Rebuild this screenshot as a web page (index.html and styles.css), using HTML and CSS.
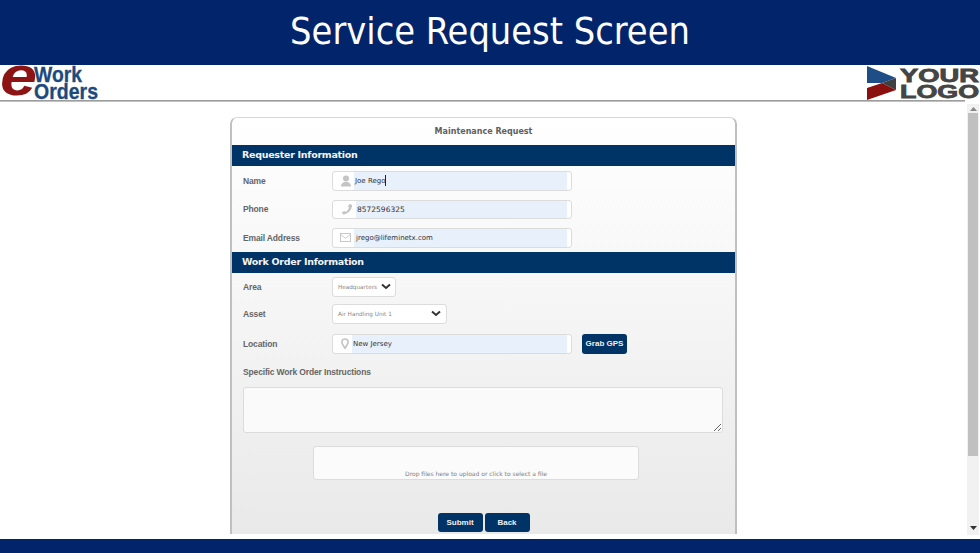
FILE: index.html
```html
<!DOCTYPE html>
<html lang="en">
<head>
<meta charset="utf-8">
<title>Service Request Screen</title>
<link rel="stylesheet" href="styles.css">
</head>
<body>
<header class="slide-title">Service Request Screen</header>
<div class="brand">
  <svg class="logo-left" width="100" height="35" viewBox="0 0 100 35">
    <text class="logo-e" x="0" y="30" textLength="37" lengthAdjust="spacingAndGlyphs">e</text>
    <text class="logo-word" x="34" y="17" textLength="48" lengthAdjust="spacingAndGlyphs">Work</text>
    <text class="logo-word" x="34" y="34" textLength="64" lengthAdjust="spacingAndGlyphs">Orders</text>
  </svg>
  <svg class="logo-right" width="113" height="35" viewBox="0 0 113 35">
    <polygon fill="#1f4e86" points="0,1 29,13 15,18 0,18"/>
    <polygon fill="#404040" points="15,18 29,13 29,25"/>
    <polygon fill="#8a1010" points="0,23 15,18 29,25 0,35"/>
    <text class="logo-your" x="33" y="17" textLength="79" lengthAdjust="spacingAndGlyphs">YOUR</text>
    <text class="logo-your" x="33" y="33" textLength="79" lengthAdjust="spacingAndGlyphs">LOGO</text>
  </svg>
</div>
<div class="brand-rule"></div>
<div class="workspace">
  <main class="viewport">
    <form class="card">
      <h1 class="card-title">Maintenance Request</h1>
      <h2 class="section">Requester Information</h2>
      <div class="group group-requester">
        <div class="row">
          <label class="label">Name</label>
          <div class="input">
            <span class="icon"><svg width="12" height="12" viewBox="0 0 12 12"><circle cx="6" cy="3.6" r="3" fill="#c4c4c4"/><path d="M1 11.5c0-3 2-4 3.5-4.4h3C9 7.500 11 8.500 11 11.500z" fill="#c4c4c4"/></svg></span>
            <span class="value value-name">Joe Rego<i class="caret"></i></span>
          </div>
        </div>
        <div class="row">
          <label class="label">Phone</label>
          <div class="input">
            <span class="icon icon-phone"><svg width="12" height="12" viewBox="0 0 12 12"><path d="M9 .8l2 1.200c.3 4.500-4 9.500-9 9.400L.8 9.300l2.800-1.400 1 1.200C6.500 8 7.800 6 8 4.300L6.800 3.500z" fill="#c4c4c4"/></svg></span>
            <span class="value value-phone">8572596325</span>
          </div>
        </div>
        <div class="row">
          <label class="label">Email Address</label>
          <div class="input">
            <span class="icon"><svg width="11" height="9" viewBox="0 0 12 10"><rect x=".5" y=".5" width="11" height="9" fill="none" stroke="#c4c4c4"/><path d="M.5 1.500L6 6l5.500-4.500" fill="none" stroke="#c4c4c4"/></svg></span>
            <span class="value value-email">jrego@lifeminetx.com</span>
          </div>
        </div>
      </div>
      <h2 class="section">Work Order Information</h2>
      <div class="group group-order">
        <div class="row">
          <label class="label">Area</label>
          <div class="select select-area"><span>Headquarters</span><svg width="10" height="7" viewBox="0 0 10 7"><path d="M1 1.500l4 3.500 4-3.500" fill="none" stroke="#333" stroke-width="2"/></svg></div>
        </div>
        <div class="row row-asset">
          <label class="label">Asset</label>
          <div class="select select-asset"><span>Air Handling Unit 1</span><svg width="10" height="7" viewBox="0 0 10 7"><path d="M1 1.500l4 3.500 4-3.500" fill="none" stroke="#333" stroke-width="2"/></svg></div>
        </div>
        <div class="row row-location">
          <label class="label">Location</label>
          <div class="input">
            <span class="icon icon-pin"><svg width="8" height="11" viewBox="0 0 9 12"><path d="M4.500 11.500C3 8.500 1 6.500 1 4.500a3.500 3.500 0 0 1 7 0c0 2-2 4-3.500 7z" fill="none" stroke="#c4c4c4" stroke-width="1.800"/></svg></span>
            <span class="value value-location">New Jersey</span>
          </div>
          <button type="button" class="btn btn-gps">Grab GPS</button>
        </div>
        <label class="label label-wide">Specific Work Order Instructions</label>
        <textarea class="notes"></textarea>
        <div class="dropzone">Drop files here to upload or click to select a file</div>
        <div class="actions">
          <button type="button" class="btn">Submit</button>
          <button type="button" class="btn">Back</button>
        </div>
      </div>
    </form>
  </main>
  <div class="scrollbar">
    <svg width="7" height="4" viewBox="0 0 7 4"><polygon points="3.500,0 7,4 0,4" fill="#888"/></svg>
    <div class="thumb"></div>
    <svg class="arrow-down" width="7" height="4" viewBox="0 0 7 4"><polygon points="0,0 7,0 3.500,4" fill="#333"/></svg>
  </div>
</div>
<footer class="slide-footer"></footer>
</body>
</html>
```
FILE: styles.css
```css
* { box-sizing: border-box; }
html, body { height: 100%; }
body {
  margin: 0;
  width: 980px;
  height: 553px;
  overflow: hidden;
  display: flex;
  flex-direction: column;
  background: #fff;
  font-family: "Liberation Sans", Arial, sans-serif;
}
.slide-title {
  flex: 0 0 65px;
  background: #02246b;
  color: #fff;
  font-family: "DejaVu Sans Condensed", "DejaVu Sans", sans-serif;
  font-stretch: condensed;
  font-size: 37.600px;
  line-height: 62px;
  text-align: center;
}
.brand {
  flex: 0 0 35px;
  display: flex;
  justify-content: space-between;
  background: #fff;
}
.logo-left, .logo-right { display: block; overflow: visible; }
.logo-e {
  font: italic bold 56px "Liberation Sans", sans-serif;
  fill: #8c1414;
}
.logo-word {
  font: bold 22px "Liberation Sans", sans-serif;
  fill: #1d4a7c;
  stroke: #1d4a7c;
  stroke-width: .3px;
}
.logo-your {
  font: bold 18px "Liberation Sans", sans-serif;
  fill: #454545;
  stroke: #454545;
  stroke-width: .8px;
}
.brand-rule {
  flex: 0 0 2px;
  margin-right: 15px;
  background: linear-gradient(#8c8c8c, #d0d0d0);
}
.workspace {
  flex: 1;
  min-height: 0;
  display: flex;
  margin-bottom: 5px;
}
.viewport {
  flex: 1;
  min-width: 0;
  overflow: hidden;
  padding: 15px 0 0 230px;
}
.card {
  width: 507px;
  height: 440px;
  border-style: solid;
  border-width: 1px 2px 0;
  border-color: #d8d8d8 #c0c0c0;
  border-radius: 7px 7px 0 0;
  background: linear-gradient(#fff, #f6f6f6 40%, #e8e8e8);
  margin: 0;
}
.card-title {
  margin: 0;
  height: 27px;
  font: bold 8px/27px "DejaVu Sans", sans-serif;
  color: #606060;
  text-align: center;
}
.section {
  margin: 0;
  height: 21px;
  padding-left: 10px;
  background: #003366;
  color: #f4f4f4;
  font: bold 9.500px/20px "DejaVu Sans", sans-serif;
  letter-spacing: -.28px;
}
.group { padding: 5px 0 0 11px; }
.group-requester { height: 86px; }
.group-order { padding-top: 4px; }
.row {
  display: flex;
  align-items: center;
  height: 19.500px;
  margin-bottom: 9px;
}
.row-asset { margin-top: -1.500px; margin-bottom: 10.500px; }
.row-location { margin-bottom: 12px; }
.label {
  flex: 0 0 89px;
  font-size: 8.500px;
  letter-spacing: -.15px;
  font-weight: bold;
  color: #666;
}
.label-wide { display: block; height: 12px; line-height: 12px; }
.input {
  flex: 0 0 240px;
  height: 19.500px;
  display: flex;
  background: #fff;
  border: 1px solid #dcdcdc;
  border-radius: 3px;
  padding-right: 4px;
}
.icon {
  flex: 0 0 21px;
  display: flex;
  align-items: center;
  justify-content: center;
  padding-left: 4px;
}
.icon-phone { flex-basis: 23px; }
.icon-pin { flex-basis: 19px; }
.value {
  flex: 1;
  display: flex;
  align-items: center;
  background: #e8f0fb;
  font: 7px "DejaVu Sans", sans-serif;
  color: #333;
}
.value-name, .value-location { padding-left: 1px; }
.value-phone { padding-left: 1px; font-size: 7.500px; }
.value-email { padding-left: 2px; }
.caret {
  width: 1px;
  height: 11px;
  background: #222;
}
.select {
  height: 19.500px;
  display: flex;
  align-items: center;
  justify-content: space-between;
  background: #fff;
  border: 1px solid #dcdcdc;
  border-radius: 3px;
  padding: 0 4px 0 5px;
  font: 5.700px "DejaVu Sans", sans-serif;
  color: #888;
}
.select-area { flex: 0 0 64px; }
.select-asset { flex: 0 0 115px; padding-right: 5px; }
.btn {
  height: 19.500px;
  padding: 0;
  width: 45px;
  border: 0;
  border-radius: 3px;
  background: #003366;
  color: #f0f0f0;
  font: bold 8px "Liberation Sans", sans-serif;
}
.btn-gps { margin-left: 10px; }
.notes {
  display: block;
  width: 480px;
  height: 46px;
  margin-top: 9px;
  background: #fafafa;
  border: 1px solid #dcdcdc;
  border-radius: 3px;
}
.dropzone {
  width: 326px;
  height: 34px;
  margin: 13px 0 0 70px;
  padding-top: 23px;
  background: #fbfbfb;
  border: 1px solid #dcdcdc;
  border-radius: 3px;
  font: 6px "DejaVu Sans", sans-serif;
  color: #808080;
  text-align: center;
}
.actions {
  display: flex;
  justify-content: center;
  gap: 2px;
  margin: 33px 11px 0 0;
}
.scrollbar {
  flex: 0 0 12px;
  margin: 2px 1px -1px 0;
  display: flex;
  flex-direction: column;
  align-items: center;
  padding: 3px 0 5px;
  background: #f1f1f1;
}
.thumb {
  width: 10px;
  height: 343px;
  margin-top: 2px;
  background: #c0c0c0;
}
.arrow-down { margin-top: auto; }
.slide-footer {
  flex: 0 0 14px;
  background: #02246b;
}
```
